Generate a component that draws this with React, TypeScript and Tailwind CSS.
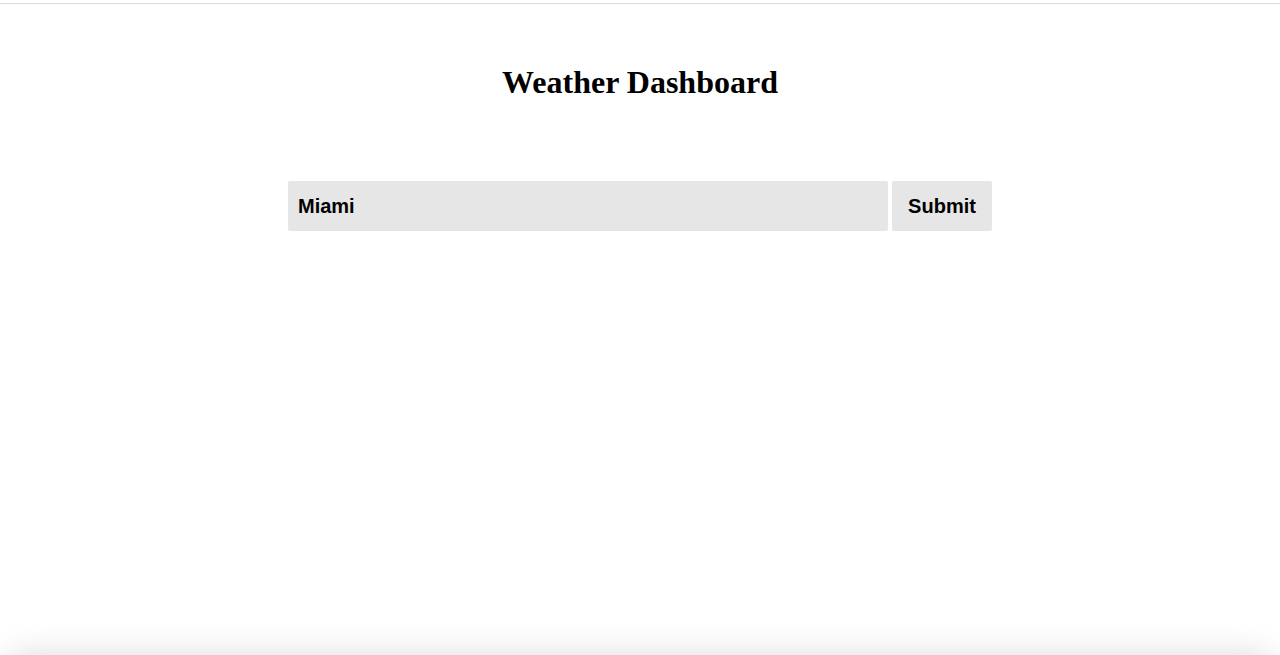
import React from "react";

export default function App() {
  return (
    <div className="flex h-[655px] flex-col overflow-hidden bg-white">
      <div className="mt-[3px] h-px w-full bg-[#dcdcdc]" />
      <h1
        className="mt-[60px] text-center text-[32px] font-bold leading-[37px] text-black"
        style={{ fontFamily: '"Liberation Serif", "Times New Roman", serif' }}
      >
        Weather Dashboard
      </h1>
      <form
        className="mt-[80px] flex justify-center gap-[4px]"
        onSubmit={(e) => e.preventDefault()}
        style={{ fontFamily: '"Liberation Sans", Arial, sans-serif' }}
      >
        <input
          defaultValue="Miami"
          className="h-[50px] w-[600px] rounded-[2px] bg-[#e6e6e6] px-[10px] text-[20px] font-bold text-black outline-none"
        />
        <button
          type="submit"
          className="h-[50px] w-[100px] rounded-[2px] bg-[#e6e6e6] text-[20px] font-bold text-black"
        >
          Submit
        </button>
      </form>
      <div className="flex-1" />
      <div className="relative h-[45px] overflow-hidden">
        <div className="absolute left-0 right-0 top-[45px] h-[60px] rounded-[40px] shadow-[0_0_35px_rgba(0,0,0,0.14)]" />
      </div>
    </div>
  );
}
